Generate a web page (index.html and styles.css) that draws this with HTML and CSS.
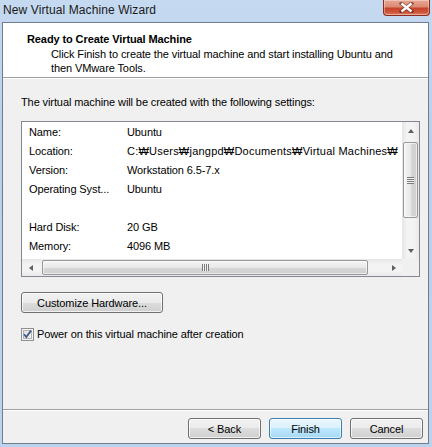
FILE: index.html
```html
<!DOCTYPE html>
<html>
<head>
<meta charset="utf-8">
<link rel="stylesheet" href="styles.css">
</head>
<body>
<div class="frame">
  <div class="titlebar">
    <div class="title">New Virtual Machine Wizard</div>
    <div class="close">
      <svg width="15" height="11" viewBox="0 0 15 11"><path d="M2.5 1.5 L12.5 9.5 M12.5 1.5 L2.5 9.5" stroke="#4a1a12" stroke-width="4" stroke-linecap="square" fill="none" opacity="0.55"/><path d="M2.5 1.5 L12.5 9.5 M12.5 1.5 L2.5 9.5" stroke="#fff" stroke-width="2.4" fill="none"/></svg>
    </div>
  </div>
  <div class="client">
    <div class="header">
      <div class="h-title">Ready to Create Virtual Machine</div>
      <div class="h-desc">Click Finish to create the virtual machine and start installing Ubuntu and<br>then VMware Tools.</div>
    </div>
    <div class="content">
      <div class="intro">The virtual machine will be created with the following settings:</div>
      <div class="listbox">
        <div class="rows">
          <div class="row"><span class="lbl">Name:</span><span class="val">Ubuntu</span></div>
          <div class="row"><span class="lbl">Location:</span><span class="val val-path">C:₩Users₩jangpd₩Documents₩Virtual Machines₩</span></div>
          <div class="row"><span class="lbl">Version:</span><span class="val">Workstation 6.5-7.x</span></div>
          <div class="row"><span class="lbl">Operating Syst...</span><span class="val">Ubuntu</span></div>
          <div class="row"><span class="lbl"></span><span class="val"></span></div>
          <div class="row"><span class="lbl">Hard Disk:</span><span class="val">20 GB</span></div>
          <div class="row"><span class="lbl">Memory:</span><span class="val">4096 MB</span></div>
        </div>
        <div class="vscroll">
          <div class="arrow-box"><span class="tri tri-up"></span></div>
          <div class="vtrack"><div class="vthumb"><span class="grip-v"></span></div></div>
          <div class="arrow-box"><span class="tri tri-down"></span></div>
        </div>
        <div class="hscroll">
          <div class="arrow-box"><span class="tri tri-left"></span></div>
          <div class="htrack"><div class="hthumb"><span class="grip-h"></span></div></div>
          <div class="arrow-box"><span class="tri tri-right"></span></div>
        </div>
        <div class="corner"></div>
      </div>
      <button class="btn btn-custom">Customize Hardware...</button>
      <label class="check">
        <svg class="cbox" width="13" height="13" viewBox="0 0 13 13">
          <defs><linearGradient id="cg" x1="0" y1="0" x2="1" y2="1"><stop offset="0" stop-color="#dcdcdc"/><stop offset="1" stop-color="#fbfbfb"/></linearGradient></defs>
          <rect x="0.5" y="0.5" width="12" height="12" fill="#f4f4f4" stroke="#8e8f8f"/>
          <rect x="2.5" y="2.5" width="8" height="8" fill="url(#cg)" stroke="#b5b5b5" stroke-width="1"/>
          <path d="M3 6.2 L5.3 9 L10 2.6" stroke="#3e5a8a" stroke-width="1.8" fill="none"/>
        </svg>
        <span>Power on this virtual machine after creation</span>
      </label>
    </div>
    <div class="footer">
      <button class="btn">&lt; Back</button>
      <button class="btn btn-default">Finish</button>
      <button class="btn">Cancel</button>
    </div>
  </div>
</div>
</body>
</html>
```

FILE: styles.css
```css
* { box-sizing: border-box; }
html, body { margin: 0; padding: 0; }
body {
  width: 432px;
  height: 447px;
  overflow: hidden;
  font-family: "Liberation Sans", Arial, sans-serif;
  font-size: 11px;
  letter-spacing: -0.1px;
  color: #000;
}
.frame {
  width: 432px;
  height: 447px;
  display: flex;
  flex-direction: column;
  background: linear-gradient(to bottom, #c5d9f0 0%, #b9d0ea 30%, #bcd3ee 100%);
}
.titlebar {
  height: 22px;
  display: flex;
  align-items: flex-start;
  flex: none;
}
.title {
  padding-left: 3px;
  line-height: 21px;
  font-size: 12px;
  letter-spacing: 0.1px;
  color: #1a1a1a;
}
.close {
  margin-left: auto;
  margin-right: 2px;
  width: 47px;
  height: 16px;
  border: 1px solid #8c2b1e;
  border-top: none;
  border-radius: 0 0 4px 4px;
  background: linear-gradient(to bottom, #e9a896 0%, #dd8a72 45%, #c5432a 55%, #d05a3d 85%, #dd8a6e 100%);
  box-shadow: inset 0 0 0 1px rgba(255,255,255,0.35);
  display: flex;
  align-items: center;
  justify-content: center;
}
.client {
  flex: 1;
  margin: 0 3px 3px 2px;
  border: 1px solid #6f7d8f;
  background: #f0f0f0;
  display: flex;
  flex-direction: column;
}
.header {
  height: 55px;
  background: #fff;
  border-bottom: 1px solid #a0a0a0;
  box-shadow: 0 1px 0 #fff;
  padding: 9px 0 0 24px;
  flex: none;
}
.h-title {
  font-weight: bold;
  line-height: 14px;
}
.h-desc {
  padding-left: 24px;
  line-height: 14px;
  margin-top: 1px;
}
.content {
  flex: 1;
  padding: 17px 8px 0 18px;
  display: flex;
  flex-direction: column;
  align-items: flex-start;
}
.intro { line-height: 14px; }
.listbox {
  margin-top: 12px;
  width: 399px;
  height: 156px;
  border: 1px solid #828790;
  background: #fff;
  display: grid;
  grid-template-columns: 380px 17px;
  grid-template-rows: 137px 17px;
}
.rows {
  padding: 1px 0 0 7px;
  overflow: hidden;
}
.row {
  display: flex;
  height: 19px;
  line-height: 19px;
  white-space: nowrap;
}
.lbl { width: 98px; flex: none; }
.val { flex: none; }
.val-path {
  font-family: "Liberation Sans", "Noto Sans CJK KR", sans-serif;
  letter-spacing: 0.22px;
}
.vscroll {
  display: flex;
  flex-direction: column;
  background: linear-gradient(to right, #e6e6e6, #f3f3f3 30%, #f3f3f3 70%, #e9e9e9);
}
.hscroll {
  display: flex;
  background: linear-gradient(to bottom, #e6e6e6, #f3f3f3 30%, #f3f3f3 70%, #e9e9e9);
}
.arrow-box {
  width: 17px;
  height: 17px;
  flex: none;
  display: flex;
  align-items: center;
  justify-content: center;
}
.tri { width: 0; height: 0; display: block; }
.tri-up { border-left: 3.5px solid transparent; border-right: 3.5px solid transparent; border-bottom: 4px solid #606060; }
.tri-down { border-left: 3.5px solid transparent; border-right: 3.5px solid transparent; border-top: 4px solid #606060; }
.tri-left { border-top: 3.5px solid transparent; border-bottom: 3.5px solid transparent; border-right: 4px solid #606060; }
.tri-right { border-top: 3.5px solid transparent; border-bottom: 3.5px solid transparent; border-left: 4px solid #606060; }
.vtrack { flex: 1; padding: 3px 1px 0 1px; }
.vthumb {
  height: 76px;
  border: 1px solid #979797;
  border-radius: 2px;
  background: linear-gradient(to right, #f5f5f5 0%, #e8e8e8 50%, #d8d8d8 51%, #cfcfcf 100%);
  box-shadow: inset 0 0 0 1px rgba(255,255,255,0.6);
  display: flex;
  align-items: center;
  justify-content: center;
}
.grip-v {
  width: 7px;
  height: 7px;
  background: repeating-linear-gradient(to bottom, #7a7a7a 0 1px, #f4f4f4 1px 2px);
}
.htrack { flex: 1; padding: 1px 0 1px 3px; }
.hthumb {
  width: 326px;
  height: 100%;
  border: 1px solid #979797;
  border-radius: 2px;
  background: linear-gradient(to bottom, #f5f5f5 0%, #e8e8e8 50%, #d8d8d8 51%, #cfcfcf 100%);
  box-shadow: inset 0 0 0 1px rgba(255,255,255,0.6);
  display: flex;
  align-items: center;
  justify-content: center;
}
.grip-h {
  width: 7px;
  height: 7px;
  background: repeating-linear-gradient(to right, #7a7a7a 0 1px, #f4f4f4 1px 2px);
}
.corner { background: #f0f0f0; }
.btn {
  font-family: "Liberation Sans", Arial, sans-serif;
  font-size: 11px;
  letter-spacing: -0.1px;
  color: #000;
  height: 21px;
  width: 73px;
  padding: 0;
  border: 1px solid #707070;
  border-radius: 3px;
  background: linear-gradient(to bottom, #f2f2f2 0%, #ebebeb 50%, #dddddd 50%, #cfcfcf 100%);
  box-shadow: inset 0 0 0 1px rgba(255,255,255,0.7);
}
.btn-custom {
  margin-top: 15px;
  width: 142px;
}
.btn-default {
  border-color: #3c7fb1;
  background: linear-gradient(to bottom, #eaf6fd 0%, #d9f0fc 50%, #bee6fd 50%, #a7d9f5 100%);
  box-shadow: inset 0 0 0 1px rgba(255,255,255,0.6);
}
.check {
  margin-top: 14px;
  display: flex;
  align-items: center;
  line-height: 14px;
}
.cbox { flex: none; margin-right: 3px; }
.footer {
  flex: none;
  border-top: 1px solid #a0a0a0;
  box-shadow: inset 0 1px 0 #fff;
  padding: 8px 5px 4px 0;
  display: flex;
  justify-content: flex-end;
  gap: 8px;
}
```
